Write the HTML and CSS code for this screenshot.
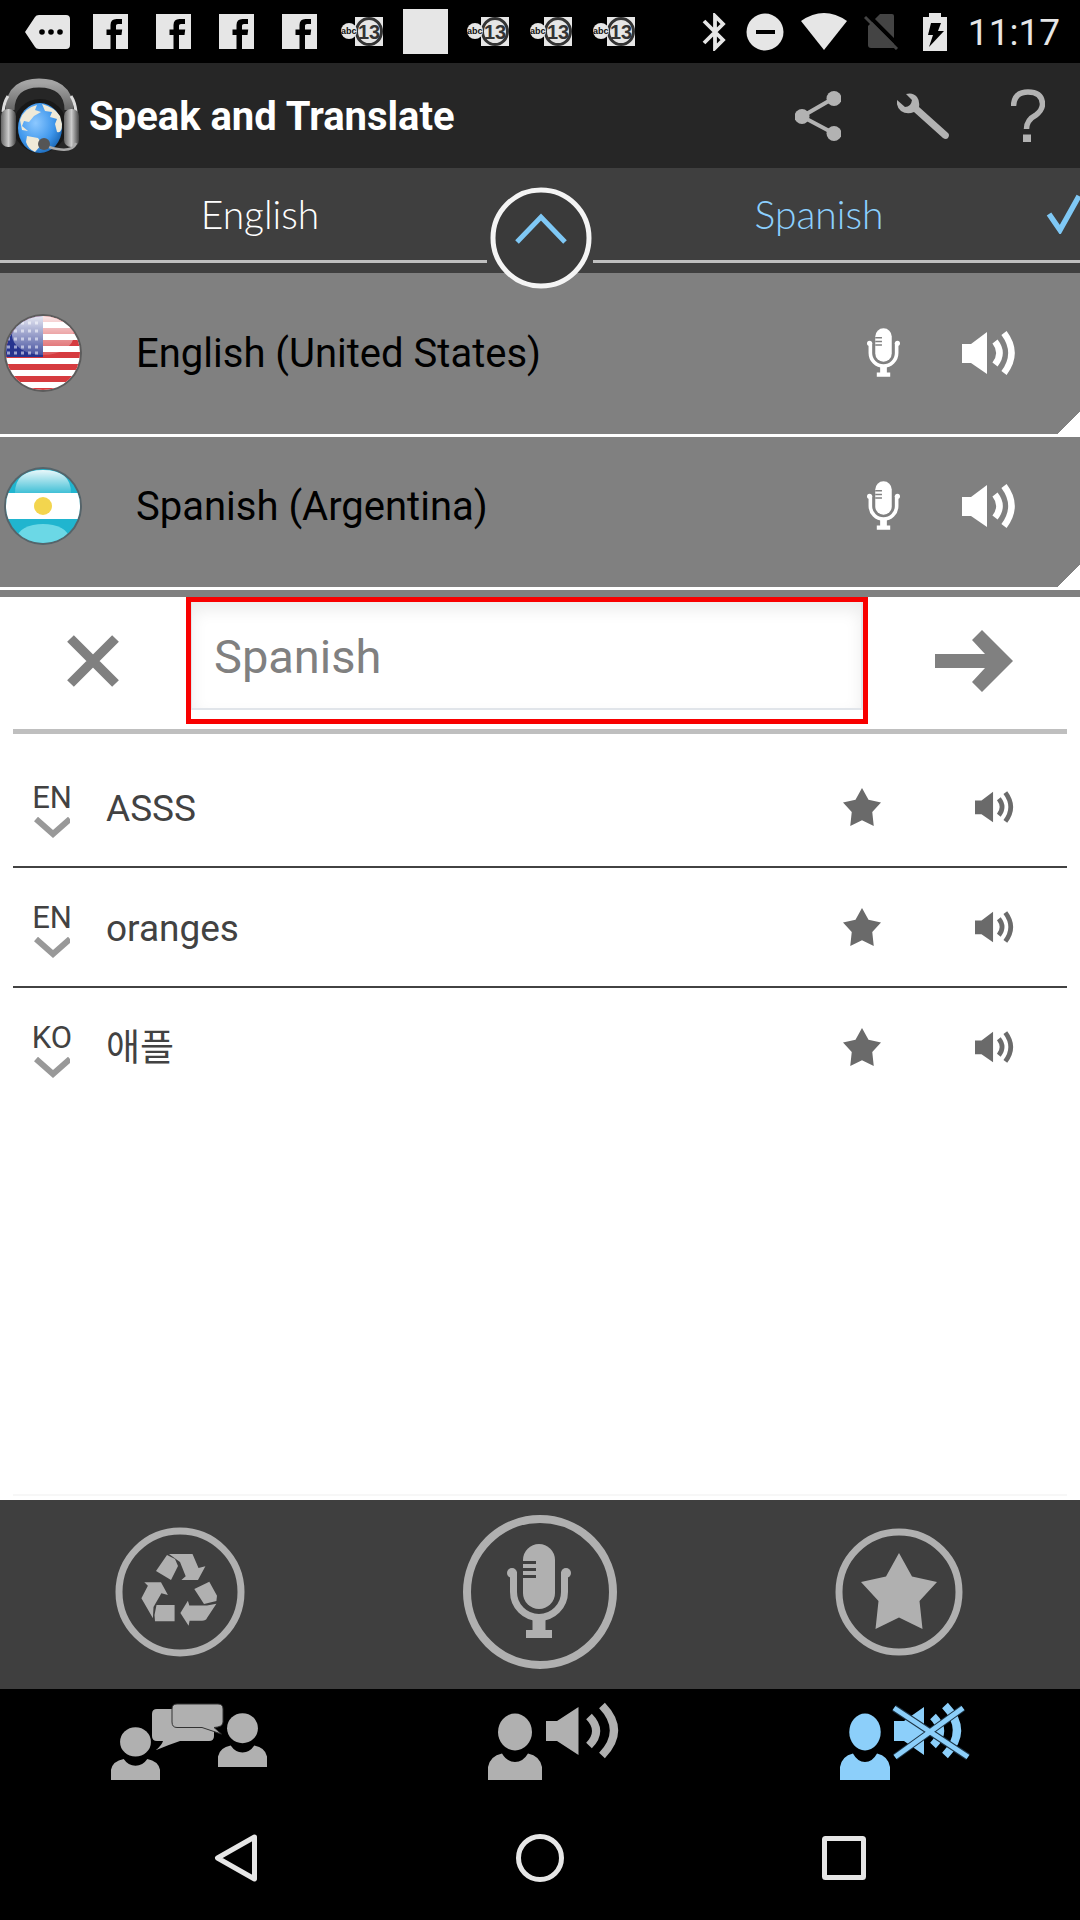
FILE: index.html
```html
<!DOCTYPE html>
<html lang="en">
<head>
<meta charset="utf-8">
<meta name="viewport" content="width=device-width, initial-scale=1">
<title>Speak and Translate</title>
<link rel="stylesheet" href="styles.css">
</head>
<body>

<svg class="defs" aria-hidden="true">
  <symbol id="speaker" viewBox="0 0 54 46">
    <path d="M0 14H9L25 2V44L9 33H0Z" fill="currentColor"/>
    <path d="M33 11.500Q42 23 33 34.500M42 3Q57 23 42 43" fill="none" stroke="currentColor" stroke-width="6.500"/>
  </symbol>
  <symbol id="mic" viewBox="0 0 64 94">
    <rect x="16" width="32" height="65" rx="16" fill="currentColor"/>
    <path class="mic-slots" d="M16 18.500H29M16 25.500H29M16 32.500H29" stroke-width="3"/>
    <path d="M6.500 28V48A25.500 25.500 0 0 0 57.500 48V28" fill="none" stroke="currentColor" stroke-width="7"/>
    <circle cx="5" cy="29" r="5" fill="currentColor"/>
    <circle cx="59" cy="29" r="5" fill="currentColor"/>
    <path d="M25.500 74H38.500V86H45V94H19V86H25.500Z" fill="currentColor"/>
  </symbol>
  <symbol id="star" viewBox="0 0 76 76">
    <path d="M38 0L51 23.500L76 29L58.500 48L61.500 76L38 64.500L14.500 76L17.500 48L0 29L25 23.500Z" fill="currentColor"/>
  </symbol>
  <symbol id="chevron" viewBox="0 0 36 21">
    <path d="M2 2L19 17L36 2" fill="none" stroke="currentColor" stroke-width="6"/>
  </symbol>
  <symbol id="facebook" viewBox="0 0 45 35">
    <path fill="currentColor" fill-rule="evenodd" d="M5 0H40V35H28V21H33.500L34.200 15.500H28V11.500Q28 10 30 10H34V5H28.500Q22.500 5 22.500 11V15.500H18.500V21H22.500V35H5Z"/>
  </symbol>
  <symbol id="person" viewBox="0 0 54 68" preserveAspectRatio="none">
    <ellipse cx="27" cy="20" rx="17" ry="18.500" fill="currentColor"/>
    <path d="M0 68V55Q2 44 14 41.500Q19 50 27 50Q35 50 40 41.500Q52 44 54 55V68Z" fill="currentColor"/>
  </symbol>
</svg>

<header class="status">
  <div class="status-left">
    <svg width="45" height="34" viewBox="0 0 45 34"><path fill="#e6e6e6" d="M0 17L10 2Q11 0 14 0H41Q45 0 45 4V30Q45 34 41 34H14Q11 34 10 32Z"/><circle cx="17" cy="17" r="2.800"/><circle cx="26" cy="17" r="2.800"/><circle cx="35" cy="17" r="2.800"/></svg>
    <svg width="45" height="35"><use href="#facebook"/></svg>
    <svg width="45" height="35"><use href="#facebook"/></svg>
    <svg width="45" height="35"><use href="#facebook"/></svg>
    <svg width="45" height="35"><use href="#facebook"/></svg>
    <svg class="abc13" width="45" height="30" viewBox="0 0 45 30"><rect x="15" width="28" height="29" fill="#e6e6e6"/><ellipse cx="29" cy="14.500" rx="12.500" ry="13" fill="none" stroke="#333" stroke-width="3"/><circle cx="9" cy="14" r="8" fill="#e6e6e6"/><text x="1" y="17" class="abc-small">abc</text><text x="18" y="22" class="abc-big">13</text></svg>
    <span class="blank-note"></span>
    <svg class="abc13" width="45" height="30" viewBox="0 0 45 30"><rect x="15" width="28" height="29" fill="#e6e6e6"/><ellipse cx="29" cy="14.500" rx="12.500" ry="13" fill="none" stroke="#333" stroke-width="3"/><circle cx="9" cy="14" r="8" fill="#e6e6e6"/><text x="1" y="17" class="abc-small">abc</text><text x="18" y="22" class="abc-big">13</text></svg>
    <svg class="abc13" width="45" height="30" viewBox="0 0 45 30"><rect x="15" width="28" height="29" fill="#e6e6e6"/><ellipse cx="29" cy="14.500" rx="12.500" ry="13" fill="none" stroke="#333" stroke-width="3"/><circle cx="9" cy="14" r="8" fill="#e6e6e6"/><text x="1" y="17" class="abc-small">abc</text><text x="18" y="22" class="abc-big">13</text></svg>
    <svg class="abc13" width="45" height="30" viewBox="0 0 45 30"><rect x="15" width="28" height="29" fill="#e6e6e6"/><ellipse cx="29" cy="14.500" rx="12.500" ry="13" fill="none" stroke="#333" stroke-width="3"/><circle cx="9" cy="14" r="8" fill="#e6e6e6"/><text x="1" y="17" class="abc-small">abc</text><text x="18" y="22" class="abc-big">13</text></svg>
  </div>
  <div class="status-right">
    <svg width="30" height="38" viewBox="0 0 30 38"><path d="M6 8L25 27L17 35V3L25 11L6 30" fill="none" stroke="#e6e6e6" stroke-width="3.800"/></svg>
    <svg width="39" height="38" viewBox="0 0 39 38"><circle cx="20" cy="19" r="18.500" fill="#e6e6e6"/><path d="M11 17H30V21H11Z"/></svg>
    <svg width="46" height="37" viewBox="0 0 46 37"><path d="M23 37L0 8Q23 -8 46 8Z" fill="#e6e6e6"/></svg>
    <svg width="38" height="37" viewBox="0 0 38 37"><path d="M10 7L16 1H28Q30 1 30 3V35H7Q4 35 4 32V13Z" fill="#444"/><path d="M4 2L36 34" stroke="#000" stroke-width="4"/><path d="M1 4L33 36" stroke="#444" stroke-width="3"/></svg>
    <svg width="32" height="38" viewBox="0 0 32 38"><path d="M4 4H10V0H22V4H28V38H4Z" fill="#e6e6e6"/><path d="M12 10H22L19 18H25L10 34L14 22H9Z"/></svg>
    <time>11:17</time>
  </div>
</header>

<header class="appbar">
  <svg class="logo" width="80" height="80" viewBox="0 0 80 80" aria-hidden="true">
    <defs>
      <radialGradient id="sea" cx=".4" cy=".4" r=".7"><stop offset="0" stop-color="#8cc8ff"/><stop offset=".6" stop-color="#3f97ec"/><stop offset="1" stop-color="#1560ad"/></radialGradient>
      <linearGradient id="band" x2="0" y2="1"><stop offset="0" stop-color="#a5a5a5"/><stop offset="1" stop-color="#666"/></linearGradient>
      <linearGradient id="cup"><stop offset="0" stop-color="#666"/><stop offset=".5" stop-color="#ccc"/><stop offset="1" stop-color="#444"/></linearGradient>
    </defs>
    <path d="M10 34C10 13 24 7 39 7S69 13 69 34" fill="none" stroke="url(#band)" stroke-width="9"/>
    <path d="M8 20Q4 26 3 36M71 20Q75 26 76 36" fill="none" stroke="#ddd" stroke-width="3"/>
    <ellipse cx="40" cy="50" rx="27" ry="27" fill="#181818"/>
    <ellipse cx="40" cy="52" rx="22" ry="25" fill="url(#sea)"/>
    <path d="M20 44Q24 32 37 29L35 34L41 36L34 40L29 46L24 45L22 50L28 55L22 54ZM42 28Q54 31 60 40L62 48Q62 58 57 56L55 48L57 43L50 41L52 36L45 35ZM27 60L38 62L42 68L35 76Q28 73 26 66Z" fill="#eee9d8"/>
    <rect x="1" y="33" width="15" height="38" rx="7" fill="url(#cup)"/>
    <rect x="64" y="33" width="15" height="38" rx="7" fill="url(#cup)"/>
    <path d="M76 67Q72 78 49 71" fill="none" stroke="#aaa" stroke-width="2.500"/>
    <circle cx="44" cy="68" r="6" fill="#555"/>
  </svg>
  <h1>Speak and Translate</h1>
  <button class="bar-btn" aria-label="Share">
    <svg width="46" height="50" viewBox="0 0 46 50"><path d="M39 7L7 25.500L39 42.500" fill="none" stroke="currentColor" stroke-width="4"/><g fill="currentColor"><circle cx="39" cy="7.500" r="7.500"/><circle cx="7" cy="25.500" r="7.500"/><circle cx="39" cy="42.500" r="7.500"/></g></svg>
  </button>
  <button class="bar-btn" aria-label="Settings">
    <svg width="52" height="46" viewBox="0 0 52 46"><path fill="currentColor" d="M9 1Q16 -1 20 4Q23 8 22 14L51 40Q53 42 51 45Q49 47 46 45L17 19Q10 22 4 18Q-1 14 0 7L8 14Q14 14 15 7Z"/></svg>
  </button>
  <button class="bar-btn" aria-label="Help">
    <svg width="34" height="54" viewBox="0 0 34 54"><path d="M2.500 17Q3 3 17 3T31.500 15Q31.500 21 25 26Q15.500 31 15.500 40" fill="none" stroke="currentColor" stroke-width="5.500"/><path d="M12 45.500H20V53H12Z" fill="currentColor"/></svg>
  </button>
</header>

<nav class="tabs">
  <button class="tab tab-from">English</button>
  <button class="tab tab-to">Spanish</button>
  <svg class="tick" width="40" height="40" viewBox="0 0 40 40" aria-hidden="true"><path d="M9 20L20 36L39 2" fill="none" stroke="currentColor" stroke-width="5.500"/></svg>
  <button class="toggle" aria-label="Hide languages">
    <svg width="106" height="106" viewBox="0 0 106 106"><path d="M0 70H106V83H0Z" fill="#3f3f3f"/><circle cx="54" cy="53" r="48" fill="#3a3a3a" stroke="#f4f4f4" stroke-width="5"/><path d="M30 57L54 32L78 57" fill="none" stroke="#7fc8f5" stroke-width="5"/></svg>
  </button>
</nav>

<section class="voices">
  <div class="voice">
    <svg class="flag" width="80" height="80" viewBox="0 0 80 80" aria-hidden="true">
      <defs>
        <clipPath id="round"><circle cx="40" cy="40" r="37"/></clipPath>
        <linearGradient id="gloss" x2="0" y2="1"><stop offset="0" stop-color="#fff" stop-opacity=".9"/><stop offset="1" stop-color="#fff" stop-opacity=".15"/></linearGradient>
      </defs>
      <circle cx="40" cy="40" r="39" fill="#5c5c5c"/>
      <g clip-path="url(#round)">
        <path d="M0 0H80V80H0Z" fill="#fff"/>
        <path d="M0 6H80M0 18H80M0 30H80M0 42H80M0 54H80M0 66H80M0 78H80" stroke="#d63b3f" stroke-width="6"/>
        <path d="M0 0H40V44H0Z" fill="#26348f"/>
        <path d="M4 10H38M4 18H38M4 26H38M4 34H38M4 40H38" stroke="#9ba2d0" stroke-width="3" stroke-dasharray="3 4"/>
        <ellipse cx="40" cy="22" rx="31" ry="20" fill="url(#gloss)"/>
      </g>
    </svg>
    <span class="voice-name">English (United States)</span>
    <button class="icon-btn voice-mic" aria-label="Speak English"><svg width="33" height="49"><use href="#mic"/></svg></button>
    <button class="icon-btn voice-play" aria-label="Listen in English"><svg width="54" height="46"><use href="#speaker"/></svg></button>
  </div>
  <div class="voice">
    <svg class="flag" width="80" height="80" viewBox="0 0 80 80" aria-hidden="true">
      <circle cx="40" cy="40" r="39" fill="#56646a"/>
      <g clip-path="url(#round)">
        <path d="M0 0H80V80H0Z" fill="#20b5cf"/>
        <path d="M0 27H80V53H0Z" fill="#fff"/>
        <ellipse cx="40" cy="72" rx="26" ry="14" fill="#9ff0f5" opacity=".6"/>
        <circle cx="40" cy="40" r="9" fill="#f3d54e"/>
        <path d="M12 27Q12 4 40 4T68 27Z" fill="url(#gloss)"/>
      </g>
    </svg>
    <span class="voice-name">Spanish (Argentina)</span>
    <button class="icon-btn voice-mic" aria-label="Speak Spanish"><svg width="33" height="49"><use href="#mic"/></svg></button>
    <button class="icon-btn voice-play" aria-label="Listen in Spanish"><svg width="54" height="46"><use href="#speaker"/></svg></button>
  </div>
</section>

<form class="entry">
  <button type="button" class="icon-btn entry-clear" aria-label="Clear"><svg width="52" height="52" viewBox="0 0 52 52"><path d="M3.500 3.500L48.500 48.500M48.500 3.500L3.500 48.500" stroke="currentColor" stroke-width="9.500"/></svg></button>
  <div class="entry-frame"><input class="entry-input" type="text" placeholder="Spanish" aria-label="Text to translate"></div>
  <button type="submit" class="icon-btn entry-go" aria-label="Translate"><svg width="78" height="62" viewBox="0 0 78 62"><path d="M0 24H50L37 10L47 0L78 31L47 62L37 52L50 38H0Z" fill="currentColor"/></svg></button>
</form>

<main class="history">
  <div class="phrase">
    <button class="phrase-lang">EN<svg width="36" height="21"><use href="#chevron"/></svg></button>
    <span class="phrase-text">ASSS</span>
    <button class="icon-btn phrase-star" aria-label="Favourite"><svg width="38" height="38"><use href="#star"/></svg></button>
    <button class="icon-btn phrase-play" aria-label="Listen"><svg width="39" height="34"><use href="#speaker"/></svg></button>
  </div>
  <div class="phrase">
    <button class="phrase-lang">EN<svg width="36" height="21"><use href="#chevron"/></svg></button>
    <span class="phrase-text">oranges</span>
    <button class="icon-btn phrase-star" aria-label="Favourite"><svg width="38" height="38"><use href="#star"/></svg></button>
    <button class="icon-btn phrase-play" aria-label="Listen"><svg width="39" height="34"><use href="#speaker"/></svg></button>
  </div>
  <div class="phrase">
    <button class="phrase-lang">KO<svg width="36" height="21"><use href="#chevron"/></svg></button>
    <span class="phrase-text" lang="ko">애플</span>
    <button class="icon-btn phrase-star" aria-label="Favourite"><svg width="38" height="38"><use href="#star"/></svg></button>
    <button class="icon-btn phrase-play" aria-label="Listen"><svg width="39" height="34"><use href="#speaker"/></svg></button>
  </div>
</main>

<div class="actions">
  <button class="icon-btn" aria-label="Clear history">
    <svg width="130" height="130" viewBox="0 0 130 130"><circle cx="65" cy="65" r="61" fill="none" stroke="currentColor" stroke-width="7"/><path fill="currentColor" d="M52 28L41 44L56 53L63 39L60 32ZM54 27H77.500L83.500 41L90.400 39.300L83 53H66.400L70.700 49.300L65 35ZM94.300 54.700L102 68.700L101.400 74L89 77L79.300 62ZM101.400 76.700L92 91Q91 93.700 87 93.700H74.600L73.600 98.700L65.400 86L72.900 73.700L74.300 78.500H92ZM41.500 78H59.600V94.300H40L39.500 88ZM29.300 55.300H46L52.900 68L46.400 66.300L38.500 80L37.900 91.300L26.400 71.300L32.900 58.700Z"/></svg>
  </button>
  <button class="icon-btn" aria-label="Speak">
    <svg width="156" height="156" viewBox="0 0 156 156"><circle cx="78" cy="78" r="73" fill="none" stroke="currentColor" stroke-width="8"/><use href="#mic" x="45" y="30" width="64" height="94"/></svg>
  </button>
  <button class="icon-btn" aria-label="Favourites">
    <svg width="130" height="130" viewBox="0 0 130 130"><circle cx="64" cy="65" r="60" fill="none" stroke="currentColor" stroke-width="7"/><use href="#star" x="26" y="26" width="76" height="76"/></svg>
  </button>
</div>

<div class="modes">
  <button class="icon-btn" aria-label="Conversation">
    <svg width="180" height="106" viewBox="0 0 180 106"><use href="#person" x="21" y="37" width="49" height="54"/><use href="#person" x="128" y="23" width="49" height="55"/><path fill="currentColor" d="M67 20H119Q124 20 124 25V47Q124 52 119 52H90Q78 56 65.700 61.300Q72 56 73 52H67Q62 52 62 47V25Q62 20 67 20Z"/><path fill="currentColor" stroke="#333" d="M87 15H128Q133 15 133 20V33Q133 38 124 38.500L131.400 45L112 38.500H87Q82 38.500 82 33V20Q82 15 87 15Z"/></svg>
  </button>
  <button class="icon-btn" aria-label="Voice on">
    <svg width="180" height="106" viewBox="0 0 180 106"><use href="#person" x="38" y="23" width="54" height="68"/><path fill="currentColor" d="M96 32H107L128.500 18V66L107 52H96Z"/><path d="M139 27.500Q153.500 42 139 56.500M152 16.500Q176 41.500 152 66.500" fill="none" stroke="currentColor" stroke-width="8"/></svg>
  </button>
  <button class="icon-btn mode-active" aria-label="Voice off" aria-pressed="true">
    <svg width="180" height="106" viewBox="0 0 180 106"><use href="#person" x="30" y="23" width="50" height="68"/><path fill="currentColor" d="M84 32H94L114 18V66L94 52H84Z"/><path d="M123 27.500Q137.500 42 123 56.500M135 16.500Q159 41.500 135 66.500" fill="none" stroke="currentColor" stroke-width="8"/><path d="M84 19L158 68M153 19L85 68" stroke="#1c3446" stroke-width="7"/><path d="M84 19L158 68M153 19L85 68" stroke="currentColor" stroke-width="5"/></svg>
  </button>
</div>

<footer class="sysnav">
  <button class="icon-btn" aria-label="Back"><svg width="44" height="50" viewBox="0 0 44 50"><path d="M40.500 4L3.500 25L40.500 46Z" fill="none" stroke="currentColor" stroke-width="5" stroke-linejoin="round"/></svg></button>
  <button class="icon-btn" aria-label="Home"><svg width="50" height="50" viewBox="0 0 50 50"><circle cx="25" cy="25" r="21.500" fill="none" stroke="currentColor" stroke-width="5"/></svg></button>
  <button class="icon-btn" aria-label="Recents"><svg width="44" height="44" viewBox="0 0 44 44"><rect x="2.500" y="2.500" width="39" height="39" rx="1" fill="none" stroke="currentColor" stroke-width="5"/></svg></button>
</footer>

</body>
</html>
```
FILE: styles.css
```css
* {
  box-sizing: border-box;
}

body {
  margin: 0;
  min-height: 100vh;
  display: flex;
  flex-direction: column;
  background: #fff;
  color: #424242;
  font-family: Roboto, "Noto Sans CJK KR", sans-serif;
}

button {
  margin: 0;
  padding: 0;
  border: 0;
  background: none;
  color: inherit;
  font: inherit;
}

svg {
  display: block;
  flex: none;
}

.defs {
  position: absolute;
  width: 0;
  height: 0;
}

.icon-btn {
  display: flex;
  align-items: center;
  justify-content: center;
}

.mic-slots {
  stroke: var(--slot);
}

/* Phone status bar */
.status {
  display: flex;
  align-items: center;
  justify-content: space-between;
  height: 63px;
  padding: 0 20px 0 25px;
  background: #000;
  color: #e6e6e6;
}

.status-left {
  display: flex;
  align-items: center;
  gap: 18px;
}

.status-right {
  display: flex;
  align-items: center;
  gap: 17px;
  font-size: 37px;
  line-height: 44px;
}

.status-right time {
  padding-top: 2px;
}

.blank-note {
  width: 45px;
  height: 45px;
  background: #e6e6e6;
}

.abc-small {
  font: bold 9px "Liberation Sans", sans-serif;
  fill: #111;
}

.abc-big {
  font: bold 20px "Liberation Sans", sans-serif;
  fill: #333;
}

/* App bar */
.appbar {
  display: flex;
  align-items: center;
  height: 105px;
  background: #262626;
  color: #b2b2b2;
}

.appbar h1 {
  flex: 1;
  margin: 0;
  padding: 2px 0 0 9px;
  color: #fff;
  font-size: 40px;
  font-weight: 700;
  line-height: 48px;
}

.bar-btn {
  display: flex;
  justify-content: center;
  width: 105px;
}

/* Language tabs */
.tabs {
  position: relative;
  display: grid;
  grid-template-columns: 520fr 78fr 442fr 40fr;
  align-items: center;
  height: 105px;
  padding-bottom: 13px;
  background: linear-gradient(#bfbfbf, #bfbfbf) 0 92px / 100% 3px no-repeat #3f3f3f;
}

.tab {
  font-family: Lato, sans-serif;
  font-weight: 300;
  font-size: 39px;
  line-height: 44px;
}

.tab-from {
  grid-column: 1;
  color: #fff;
}

.tab-to {
  grid-column: 3;
  color: #8cd0ff;
}

.tick {
  grid-column: 4;
  color: #7fc8f5;
}

.toggle {
  position: absolute;
  left: 50%;
  top: 17px;
  margin-left: -53px;
}

/* Voices */
.voices {
  padding: 11px 0 7px;
  background: #808080;
}

.voice {
  --slot: #808080;
  position: relative;
  display: flex;
  align-items: center;
  padding: 0 0 13px 3px;
  height: 153px;
  border-bottom: 3px solid #fff;
  color: #fff;
}

/* Folded corner */
.voice::after {
  content: "";
  position: absolute;
  right: 0;
  bottom: -3px;
  width: 25px;
  height: 25px;
  background: linear-gradient(135deg, transparent 50%, #fff 50%);
}

.voice-name {
  flex: 1;
  padding: 2px 0 0 53px;
  color: #000;
  font-size: 40px;
  line-height: 48px;
}

.voice-mic {
  width: 105px;
}

.voice-play {
  width: 105px;
  margin-right: 39px;
}

/* Text entry */
.entry {
  display: flex;
  margin: 0 0 5px;
  color: #808080;
}

.entry-clear {
  width: 186px;
}

.entry-go {
  width: 212px;
}

.entry-frame {
  flex: 1;
  padding-bottom: 9px;
  border: 5px solid #f80000;
}

.entry-input {
  display: block;
  width: 100%;
  height: 108px;
  padding: 2px 22px 0;
  border: solid #e1e5ea;
  border-width: 0 2px 2px 1px;
  background: #fff;
  box-shadow: inset 0 8px 16px #ececec;
  color: #424242;
  font: 47px/56px Roboto, sans-serif;
}

.entry-input::placeholder {
  color: #808080;
  opacity: 1;
}

/* History */
.history {
  flex: 1;
  margin: 0 13px 4px;
  padding-top: 14px;
  border-top: 5px solid #bfbfbf;
  border-bottom: 2px solid #f7f7f7;
}

.phrase {
  display: flex;
  align-items: center;
  height: 120px;
  padding-left: 19px;
  border-bottom: 2px solid #424242;
}

.phrase:last-child {
  border-bottom-color: transparent;
}

.phrase-lang {
  display: flex;
  flex-direction: column;
  align-items: center;
  width: 40px;
  padding-top: 4px;
  font-size: 31px;
  line-height: 36px;
}

.phrase-lang svg {
  margin-top: 1px;
  color: #999;
}

.phrase-text {
  flex: 1;
  padding: 4px 0 0 34px;
  font-size: 37px;
  line-height: 44px;
}

.phrase-star,
.phrase-play {
  width: 132px;
  color: #6a6a6a;
}

.phrase-play {
  margin-right: 7px;
}

/* Bottom bars */
.actions,
.modes,
.sysnav {
  display: grid;
  grid-template-columns: repeat(3, 1fr);
  align-items: center;
}

.actions {
  --slot: #3f3f3f;
  height: 189px;
  padding-bottom: 5px;
  background: #3f3f3f;
  color: #b0b0b0;
}

.modes {
  background: #000;
  color: #b0b0b0;
}

.mode-active {
  color: #8ccffa;
}

.sysnav {
  height: 125px;
  padding: 0 84px;
  background: #000;
  color: #e6e6e6;
}
```
